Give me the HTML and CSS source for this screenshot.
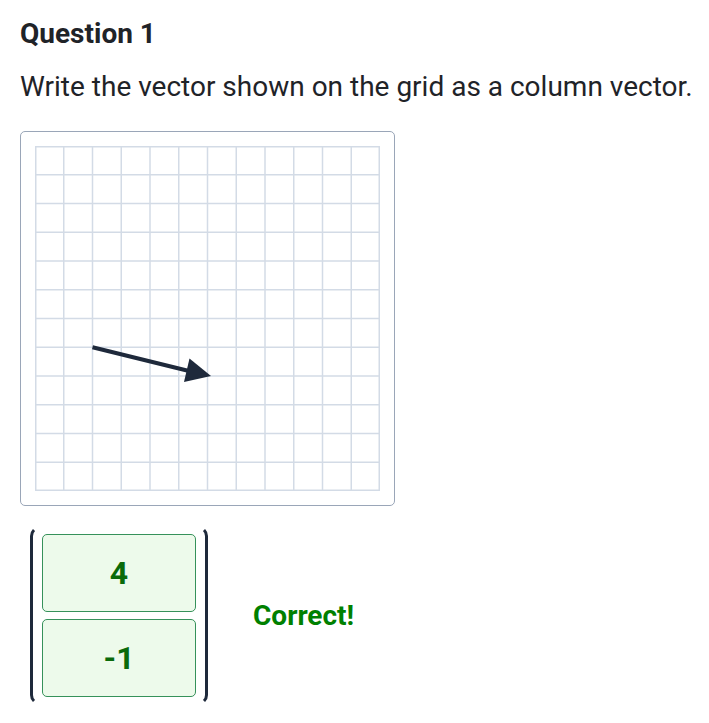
FILE: index.html
```html
<!DOCTYPE html>
<html lang="en">
<head>
    <meta charset="UTF-8">
    <meta name="viewport" content="width=device-width, initial-scale=1.0">
    <title>Column Vectors</title>
    <link rel="stylesheet" href="styles.css">
</head>
<body>
    <main class="question">
        <h2 class="question-title">Question 1</h2>
        <p class="question-text">Write the vector shown on the grid as a column vector.</p>

        <div class="grid-card">
            <svg class="grid" width="345" height="345" viewBox="0 0 345 345">
                <g stroke="#d3dbe6" stroke-width="1.5">
                    <line x1="0.75" y1="0" x2="0.75" y2="345"/>
                    <line x1="28.75" y1="0" x2="28.75" y2="345"/>
                    <line x1="57.5" y1="0" x2="57.5" y2="345"/>
                    <line x1="86.25" y1="0" x2="86.25" y2="345"/>
                    <line x1="115" y1="0" x2="115" y2="345"/>
                    <line x1="143.75" y1="0" x2="143.75" y2="345"/>
                    <line x1="172.5" y1="0" x2="172.5" y2="345"/>
                    <line x1="201.25" y1="0" x2="201.25" y2="345"/>
                    <line x1="230" y1="0" x2="230" y2="345"/>
                    <line x1="258.75" y1="0" x2="258.75" y2="345"/>
                    <line x1="287.5" y1="0" x2="287.5" y2="345"/>
                    <line x1="316.25" y1="0" x2="316.25" y2="345"/>
                    <line x1="344.25" y1="0" x2="344.25" y2="345"/>
                    <line x1="0" y1="0.75" x2="345" y2="0.75"/>
                    <line x1="0" y1="28.75" x2="345" y2="28.75"/>
                    <line x1="0" y1="57.5" x2="345" y2="57.5"/>
                    <line x1="0" y1="86.25" x2="345" y2="86.25"/>
                    <line x1="0" y1="115" x2="345" y2="115"/>
                    <line x1="0" y1="143.75" x2="345" y2="143.75"/>
                    <line x1="0" y1="172.5" x2="345" y2="172.5"/>
                    <line x1="0" y1="201.25" x2="345" y2="201.25"/>
                    <line x1="0" y1="230" x2="345" y2="230"/>
                    <line x1="0" y1="258.75" x2="345" y2="258.75"/>
                    <line x1="0" y1="287.5" x2="345" y2="287.5"/>
                    <line x1="0" y1="316.25" x2="345" y2="316.25"/>
                    <line x1="0" y1="344.25" x2="345" y2="344.25"/>
                </g>
                <!-- vector (4, -1) from grid point (2, 7) -->
                <line x1="57.5" y1="201.25" x2="156" y2="225.5" stroke="#1e293b" stroke-width="4"/>
                <polygon points="176,230 154.5,212.5 149,236" fill="#1e293b"/>
            </svg>
        </div>

        <div class="answer-row">
            <div class="column-vector">
                <input class="vector-input" type="text" value="4" readonly>
                <input class="vector-input" type="text" value="-1" readonly>
            </div>
            <span class="feedback">Correct!</span>
        </div>
    </main>
</body>
</html>
```

FILE: styles.css
```css
* {
    box-sizing: border-box;
}

body {
    margin: 0;
    padding: 20px;
    font-family: Roboto, "Liberation Sans", sans-serif;
    color: #1f2328;
    background: #fff;
}

.question-title {
    margin: 0;
    font-size: 28px;
    font-weight: 700;
    line-height: 28px;
}

.question-text {
    margin: 22px 0 0;
    font-size: 28px;
    line-height: 34px;
    white-space: nowrap;
}

.grid-card {
    width: 375px;
    margin-top: 27px;
    padding: 14px;
    border: 1px solid #9aa6b8;
    border-radius: 5px;
}

.grid {
    display: block;
}

.answer-row {
    display: flex;
    align-items: center;
    gap: 45px;
    margin-top: 20px;
    padding-left: 10px;
}

.column-vector {
    display: flex;
    flex-direction: column;
    gap: 7px;
    padding: 8px 12px;
    position: relative;
}

/* the two brackets either side of the inputs */
.column-vector::before,
.column-vector::after {
    content: "";
    position: absolute;
    top: 0;
    bottom: 0;
    width: 10px;
    border: 3px solid #1e293b;
    border-top-color: transparent;
    border-bottom-color: transparent;
}

.column-vector::before {
    left: 0;
    border-right: none;
    border-radius: 10px 0 0 10px;
}

.column-vector::after {
    right: 0;
    border-left: none;
    border-radius: 0 10px 10px 0;
}

.vector-input {
    width: 154px;
    height: 78px;
    padding: 0;
    border: 1px solid #36915a;
    border-radius: 5px;
    background: #edfaeb;
    color: #0a6a0a;
    font-family: Roboto, "Liberation Sans", sans-serif;
    font-size: 32px;
    font-weight: 700;
    text-align: center;
    outline: none;
}

.feedback {
    color: #008000;
    font-size: 28px;
    font-weight: 700;
}
```
